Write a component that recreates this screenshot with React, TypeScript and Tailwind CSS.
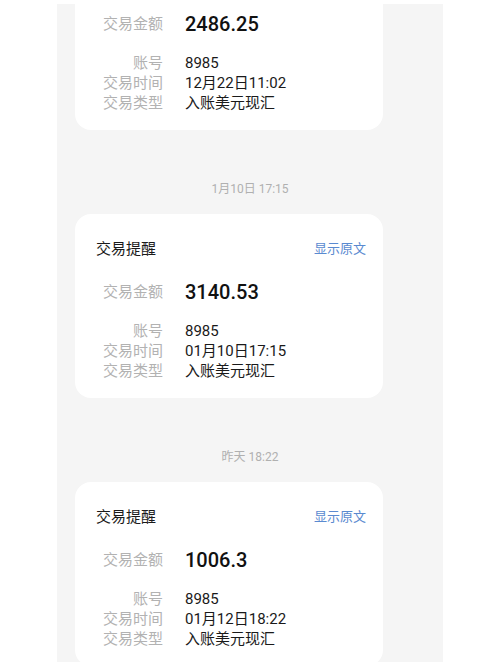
import React from 'react';

interface Txn {
  amount: string;
  account: string;
  time: string;
  kind: string;
}

const font = { fontFamily: 'Roboto, "Noto Sans CJK SC", sans-serif' };

const Row: React.FC<{ label: string; value: string }> = ({ label, value }) => (
  <div className="flex h-5 items-center">
    <span className="w-[67px] text-right text-[15px] leading-5 text-[#b2b2b2]">{label}</span>
    <span className="ml-[22px] text-[15px] leading-5 text-[#1a1a1a]">{value}</span>
  </div>
);

const TxnCard: React.FC<{ txn: Txn; className?: string }> = ({ txn, className = '' }) => (
  <div className={`ml-[18px] h-[184px] w-[308px] rounded-[16px] bg-white pl-[21px] pr-[17px] pt-[25px] ${className}`}>
    <div className="flex h-5 items-center justify-between">
      <span className="text-[15px] leading-5 text-[#1a1a1a]">交易提醒</span>
      <span className="text-[13px] leading-5 text-[#5a8ad0]">显示原文</span>
    </div>
    <div className="mt-[21px] flex h-6 items-center">
      <span className="w-[67px] text-right text-[15px] leading-5 text-[#b2b2b2]">交易金额</span>
      <span className="ml-[22px] text-[20px] font-medium leading-6 text-[#111]">{txn.amount}</span>
    </div>
    <div className="mt-[17px]">
      <Row label="账号" value={txn.account} />
      <Row label="交易时间" value={txn.time} />
      <Row label="交易类型" value={txn.kind} />
    </div>
  </div>
);

const DateLabel: React.FC<{ text: string }> = ({ text }) => (
  <div className="mb-[17px] mt-[51px] text-center text-[12px] leading-4 text-[#b0b0b0]">{text}</div>
);

export default function App() {
  const txns: Txn[] = [
    { amount: '2486.25', account: '8985', time: '12月22日11:02', kind: '入账美元现汇' },
    { amount: '3140.53', account: '8985', time: '01月10日17:15', kind: '入账美元现汇' },
    { amount: '1006.3', account: '8985', time: '01月12日18:22', kind: '入账美元现汇' },
  ];

  return (
    <div className="h-[666px] w-[500px] overflow-hidden bg-white pt-1" style={font}>
      <div className="ml-[57px] h-[658px] w-[386px] overflow-hidden bg-[#f5f5f5]">
        <TxnCard txn={txns[0]} className="-mt-[58px]" />
        <DateLabel text="1月10日 17:15" />
        <TxnCard txn={txns[1]} />
        <DateLabel text="昨天 18:22" />
        <TxnCard txn={txns[2]} />
      </div>
    </div>
  );
}
